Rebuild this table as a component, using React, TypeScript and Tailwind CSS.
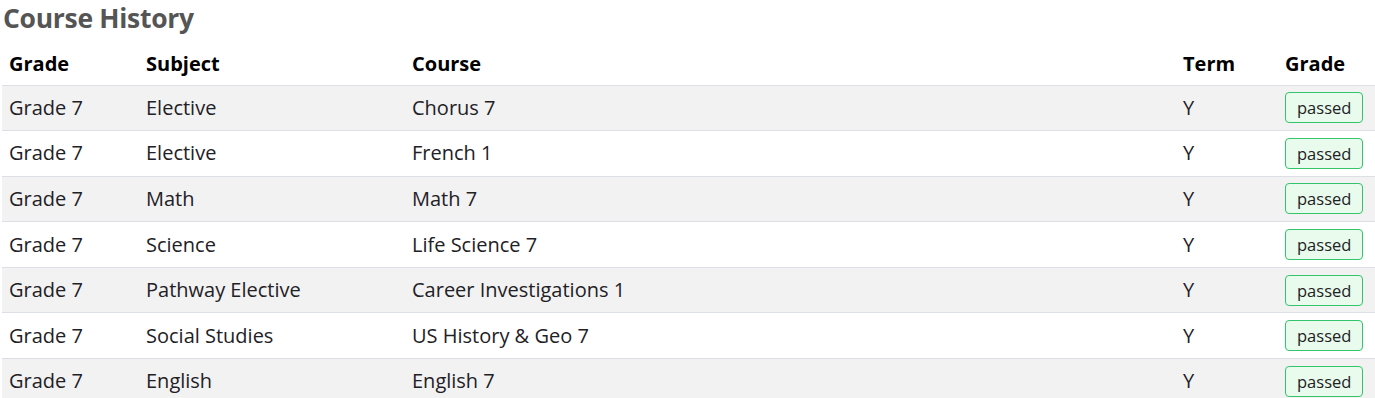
import React from "react";

const rows = [
  ["Grade 7", "Elective", "Chorus 7"],
  ["Grade 7", "Elective", "French 1"],
  ["Grade 7", "Math", "Math 7"],
  ["Grade 7", "Science", "Life Science 7"],
  ["Grade 7", "Pathway Elective", "Career Investigations 1"],
  ["Grade 7", "Social Studies", "US History & Geo 7"],
  ["Grade 7", "English", "English 7"],
];

const td = "border-t border-[#dcdfe3] px-[7px] py-[7.3px] leading-[30px] align-middle";
const th = "text-left px-[7px] pt-[8px] pb-[6px] leading-[30px] font-bold";

export default function App() {
  return (
    <div className="bg-white w-[1375px] h-[398px] overflow-hidden" style={{ fontFamily: '"Open Sans", sans-serif' }}>
      <h2
        className="text-[26.5px] font-bold text-[#555555] pl-[3px] pt-[3px] leading-[30px] tracking-[-0.3px]"
        style={{ fontFamily: '"Open Sans", sans-serif' }}
      >
        Course History
      </h2>
      <table className="ml-[2px] mt-[7.5px] w-[1380px] table-fixed border-collapse text-[20px] text-[#1e2125]">
        <colgroup>
          <col className="w-[137px]" />
          <col className="w-[266px]" />
          <col className="w-[771px]" />
          <col className="w-[102px]" />
          <col />
        </colgroup>
        <thead>
          <tr className="text-black">
            <th className={th}>Grade</th>
            <th className={th}>Subject</th>
            <th className={th}>Course</th>
            <th className={th}>Term</th>
            <th className={th}>Grade</th>
          </tr>
        </thead>
        <tbody>
          {rows.map((r, i) => (
            <tr key={i} className={i % 2 === 0 ? "bg-[#f2f2f2]" : "bg-white"}>
              {r.map((c, j) => (
                <td key={j} className={td}>
                  {c}
                </td>
              ))}
              <td className={td}>Y</td>
              <td className={td}>
                <div className="h-[30px] flex items-center">
                  <span className="block border border-[#34c46c] bg-[#e8fbec] rounded-[4px] px-[11px] text-[16.5px] leading-[29px] text-[#1e2125]">
                    passed
                  </span>
                </div>
              </td>
            </tr>
          ))}
        </tbody>
      </table>
    </div>
  );
}
